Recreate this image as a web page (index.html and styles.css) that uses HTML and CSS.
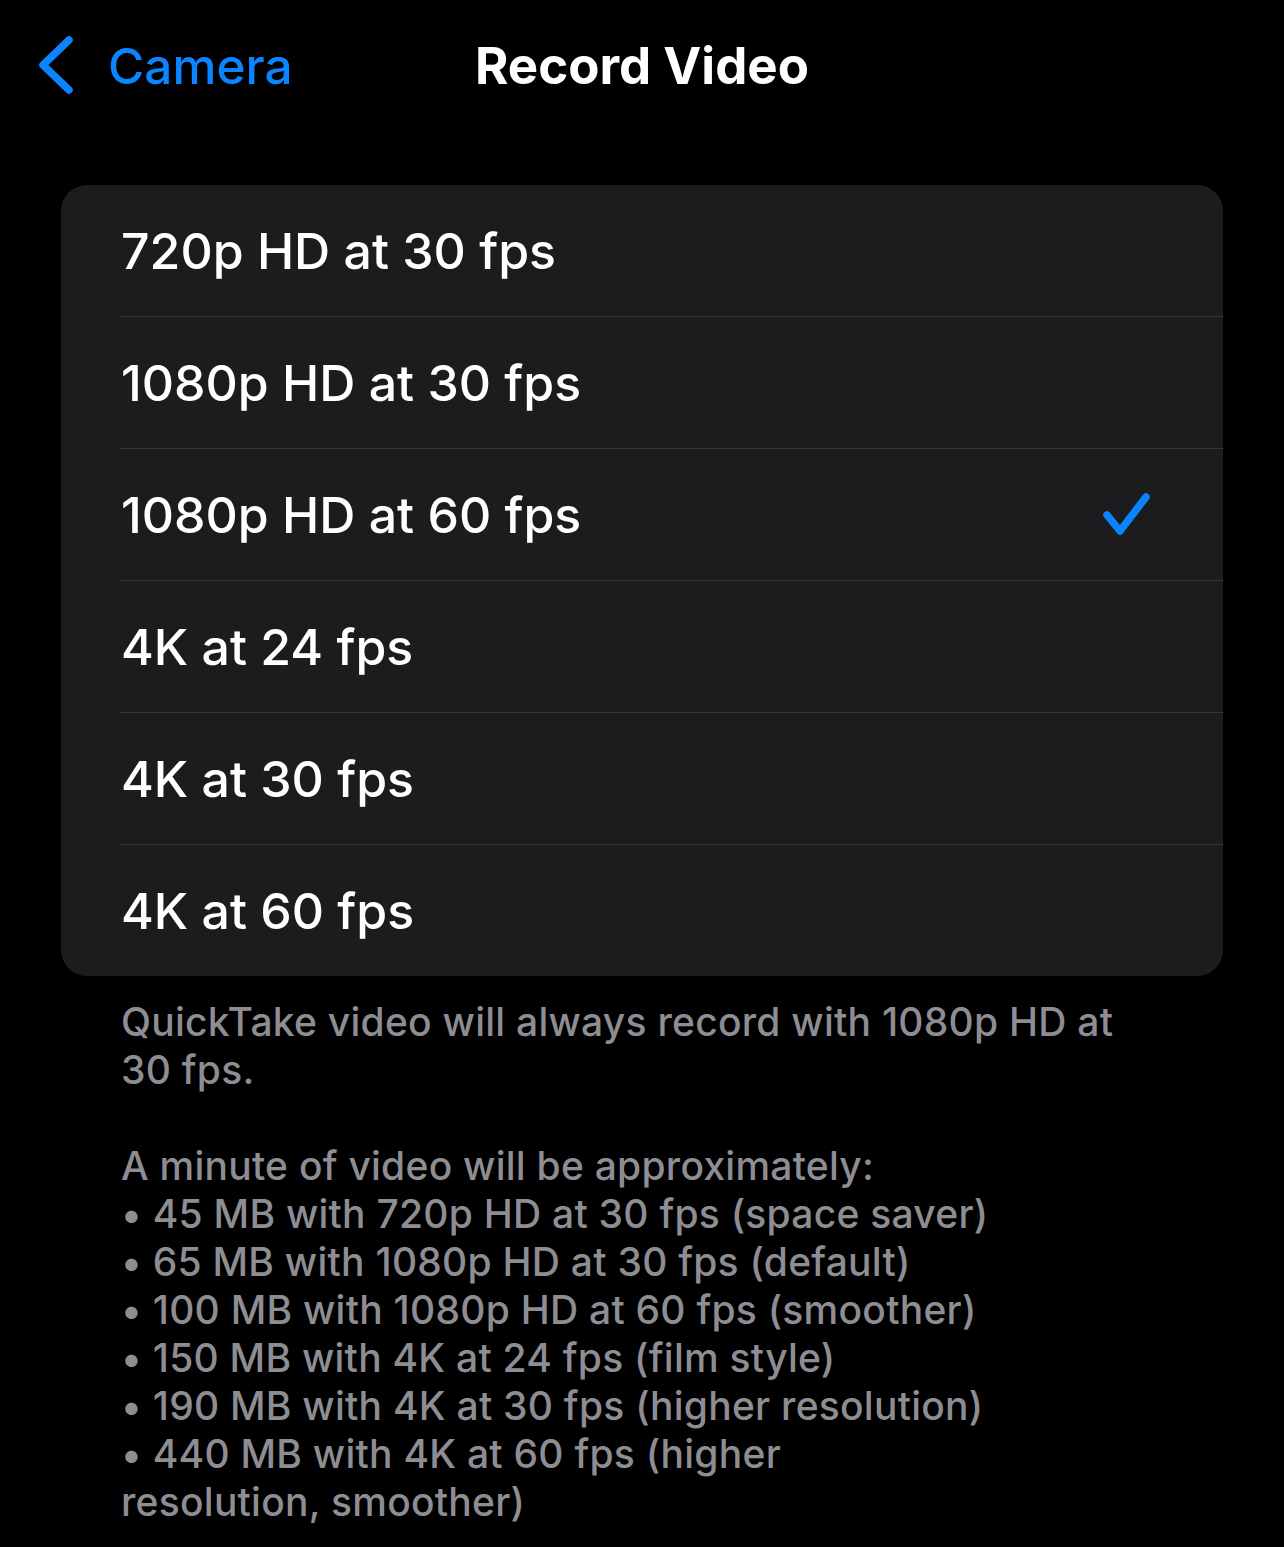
FILE: index.html
```html
<!DOCTYPE html>
<html>
<head>
<meta charset="utf-8">
<link rel="stylesheet" href="styles.css">
</head>
<body>
<div class="nav">
  <div class="back">
    <svg class="chev" width="40" height="64" viewBox="0 0 40 64"><polyline points="31,4 5,29 31,54" fill="none" stroke="#0a84ff" stroke-width="7.5" stroke-linecap="round" stroke-linejoin="round"/></svg>
    <span class="back-label">Camera</span>
  </div>
  <div class="title">Record Video</div>
</div>
<div class="card">
  <div class="row"><span>720p HD at 30 fps</span></div>
  <div class="row"><span>1080p HD at 30 fps</span></div>
  <div class="row"><span>1080p HD at 60 fps</span>
    <svg class="check" width="52" height="48" viewBox="0 0 52 48"><polyline points="6,24 19,40 45,6" fill="none" stroke="#0a84ff" stroke-width="7.5" stroke-linecap="round" stroke-linejoin="round"/></svg>
  </div>
  <div class="row"><span>4K at 24 fps</span></div>
  <div class="row"><span>4K at 30 fps</span></div>
  <div class="row"><span>4K at 60 fps</span></div>
</div>
<div class="footer">
  <div>QuickTake video will always record with 1080p HD at</div>
  <div>30 fps.</div>
  <div class="blank"></div>
  <div>A minute of video will be approximately:</div>
  <div>• 45 MB with 720p HD at 30 fps (space saver)</div>
  <div>• 65 MB with 1080p HD at 30 fps (default)</div>
  <div>• 100 MB with 1080p HD at 60 fps (smoother)</div>
  <div>• 150 MB with 4K at 24 fps (film style)</div>
  <div>• 190 MB with 4K at 30 fps (higher resolution)</div>
  <div>• 440 MB with 4K at 60 fps (higher</div>
  <div>resolution, smoother)</div>
</div>
</body>
</html>
```
FILE: styles.css
```css
html, body {
  margin: 0;
  padding: 0;
  background: #000;
}
body {
  font-family: Inter, "Noto Sans", sans-serif;
  color: #fff;
  width: 1284px;
  height: 1547px;
  overflow: hidden;
}
.nav {
  position: relative;
  height: 185px;
}
.back {
  position: absolute;
  left: 38px;
  top: 36px;
  display: flex;
  align-items: center;
  gap: 30px;
}
.chev {
  display: block;
}
.back-label {
  color: #0a84ff;
  font-size: 49.5px;
  font-weight: 500;
  margin-top: -4px;
}
.title {
  position: absolute;
  left: 0;
  right: 0;
  top: 36px;
  text-align: center;
  font-size: 51px;
  font-weight: 700;
  line-height: 60px;
}
.card {
  margin: 0 61px;
  background: #1c1c1e;
  border-radius: 26px;
  overflow: hidden;
}
.row {
  height: 131px;
  margin-left: 59px;
  padding-right: 70px;
  display: flex;
  align-items: center;
  justify-content: space-between;
  border-top: 1px solid #38383a;
  font-size: 50px;
  font-weight: 500;
}
.row:first-child {
  border-top: none;
}
.row span {
  margin-left: 1px;
}
.check {
  display: block;
}
.footer {
  margin: 22px 0 0 121px;
  color: #8d8d93;
  font-size: 39px;
  font-weight: 500;
  line-height: 48px;
  letter-spacing: 0.25px;
}
.blank {
  height: 48px;
}
```
